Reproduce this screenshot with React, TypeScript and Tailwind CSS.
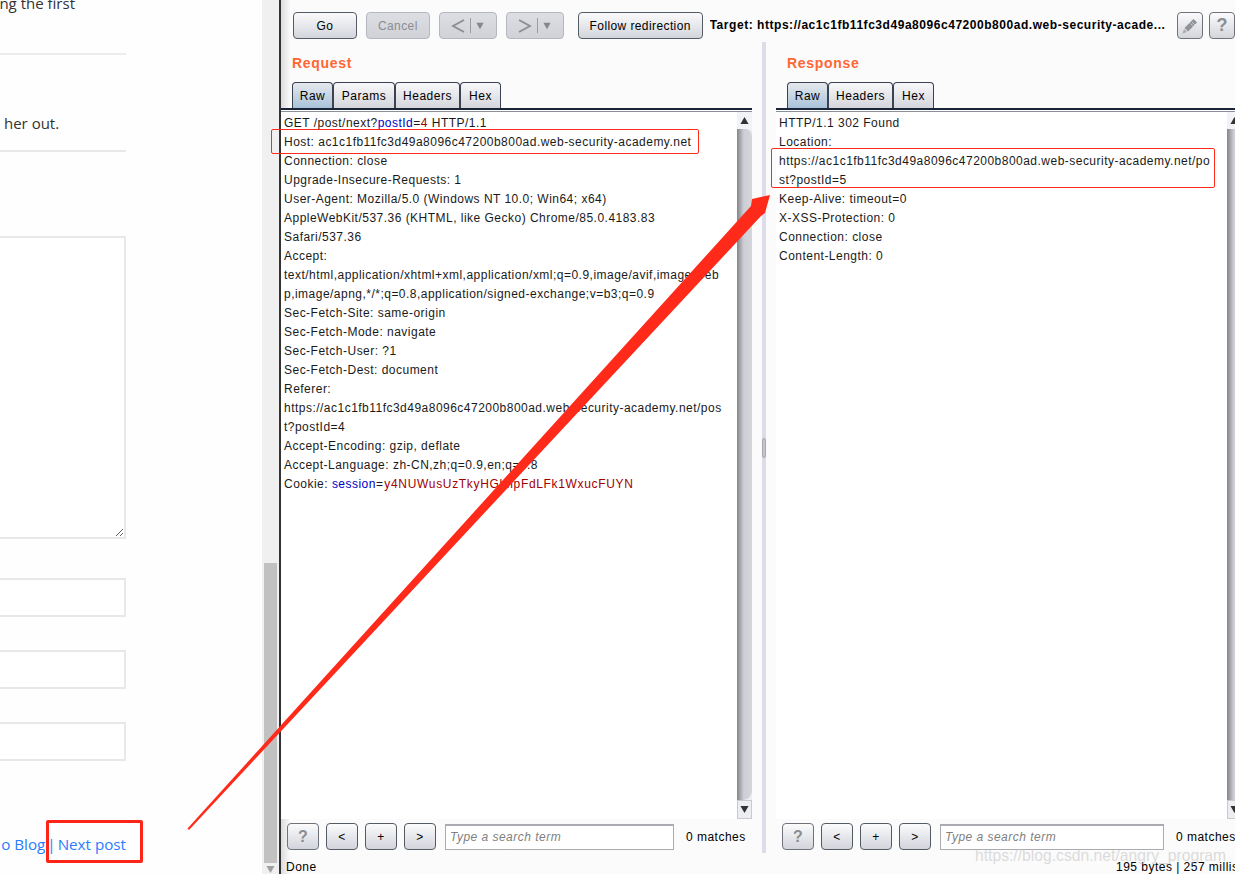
import React from "react";

const btn = "flex items-center justify-center h-[27px] rounded-[4px] border border-[#555b63] bg-gradient-to-b from-[#fbfbfc] to-[#d3d5dc] text-[12px] text-black tracking-[0.4px]";
const btnOff = "flex items-center justify-center h-[27px] rounded-[4px] border border-[#b4b7bd] bg-gradient-to-b from-[#dcdee3] to-[#d0d2d8] text-[12px] text-[#8b8d90] tracking-[0.4px]";
const btnHelp = "flex items-center justify-center h-[27px] rounded-[4px] border border-[#6f7379] bg-gradient-to-b from-[#fbfbfc] to-[#d3d5dc] text-[#8b8d90] font-bold";

const P = ({ c }: { c: string }) => <span className="text-[#0000c8]">{c}</span>;
const V = ({ c }: { c: string }) => <span className="text-[#a00000]">{c}</span>;

const requestLines: React.ReactNode[] = [
  <>GET /post/next?<P c="postId" />=<V c="4" /> HTTP/1.1</>,
  "Host: ac1c1fb11fc3d49a8096c47200b800ad.web-security-academy.net",
  "Connection: close",
  "Upgrade-Insecure-Requests: 1",
  "User-Agent: Mozilla/5.0 (Windows NT 10.0; Win64; x64)",
  "AppleWebKit/537.36 (KHTML, like Gecko) Chrome/85.0.4183.83",
  "Safari/537.36",
  "Accept:",
  "text/html,application/xhtml+xml,application/xml;q=0.9,image/avif,image/web",
  "p,image/apng,*/*;q=0.8,application/signed-exchange;v=b3;q=0.9",
  "Sec-Fetch-Site: same-origin",
  "Sec-Fetch-Mode: navigate",
  "Sec-Fetch-User: ?1",
  "Sec-Fetch-Dest: document",
  "Referer:",
  "https://ac1c1fb11fc3d49a8096c47200b800ad.web-security-academy.net/pos",
  "t?postId=4",
  "Accept-Encoding: gzip, deflate",
  "Accept-Language: zh-CN,zh;q=0.9,en;q=0.8",
  <>Cookie: <P c="session" /><span className="tracking-[1.4px]">=</span><span className="text-[#a00000] tracking-[0.67px]">y4NUWusUzTkyHGhlipFdLFk1WxucFUYN</span></>,
];

const responseLines: React.ReactNode[] = [
  "HTTP/1.1 302 Found",
  "Location:",
  "https://ac1c1fb11fc3d49a8096c47200b800ad.web-security-academy.net/po",
  "st?postId=5",
  "Keep-Alive: timeout=0",
  "X-XSS-Protection: 0",
  "Connection: close",
  "Content-Length: 0",
];

function Tri({ up, color = "#333", size = 10 }: { up?: boolean; color?: string; size?: number }) {
  return (
    <svg width={size} height={size} viewBox="0 0 10 10">
      <polygon points={up ? "5,1 9.5,9 0.5,9" : "0.5,1 9.5,1 5,9"} fill={color} />
    </svg>
  );
}

function Chevron({ left }: { left?: boolean }) {
  return (
    <svg width="14" height="16" viewBox="0 0 14 16">
      <polyline points={left ? "13,2 2,8 13,14" : "1,2 12,8 1,14"} fill="none" stroke="#8b8d90" strokeWidth="1.8" />
    </svg>
  );
}

function NavBtn({ left }: { left?: boolean }) {
  return (
    <div className={`${btnOff} w-[58px] gap-[5px]`}>
      <Chevron left={left} />
      <span className="w-px h-[15px] bg-[#9a9ca0]" />
      <Tri color="#85878b" size={8} />
    </div>
  );
}

function Scrollbar() {
  return (
    <div className="w-[15px] shrink-0 flex flex-col bg-[#eceef2]">
      <div className="h-[17px] flex items-center justify-center bg-[#f2f3f6]"><Tri up size={9} /></div>
      <div className="flex-1 rounded-tr-[7px] rounded-br-[9px] bg-gradient-to-r from-[#858587] via-[#cdcfd6] via-[45%] to-[#d4d6dc]" />
      <div className="h-[19px] flex items-center justify-center bg-[#eceef2] border border-[#c8cad0]"><Tri size={9} /></div>
    </div>
  );
}

function Pane({ title, tabs, lines, outer, inner, inputW }: {
  title: string; tabs: [string, number][]; lines: React.ReactNode[]; outer: string; inner: string; inputW: string;
}) {
  return (
    <section className={`${outer} shrink-0 h-full overflow-hidden flex flex-col`}>
      <div className={`${inner} flex flex-col h-full`}>
        <div className="h-[40px] pl-[11px] pt-[13px] text-[14px] leading-[17px] font-bold text-[#ff6633] tracking-[0.7px]">{title}</div>
        <div className="h-[26px] pl-[11px] flex">
          {tabs.map(([t, w], i) => (
            <div
              key={t}
              style={{ width: w }}
              className={`flex items-center justify-center text-[12px] tracking-[0.5px] border border-b-0 border-[#3a4352] rounded-t-[4px] ${i === 0 ? "bg-gradient-to-b from-[#e6e9ee] to-[#a9c2d9]" : "bg-gradient-to-b from-[#f8f8fa] to-[#d4d6dc]"}`}
            >
              {t}
            </div>
          ))}
        </div>
        <div className="h-[4px] border-t-2 border-b border-t-[#1a2438] border-b-[#8a8f99] bg-white" />
        <div className="h-[707px] flex bg-white">
          <div className="flex-1 pl-[3px] pt-[2px] text-[12px] leading-[19px] tracking-[0.48px] text-[#1a1a1a] whitespace-nowrap overflow-hidden">
            {lines.map((l, i) => <div key={i}>{l}</div>)}
          </div>
          <Scrollbar />
        </div>
        <div className="h-[34px] pl-[6px] flex items-center gap-[7px] pt-[1px]">
          <div className={`${btnHelp} w-[32px] text-[16px]`}>?</div>
          <div className={`${btn} w-[32px]`}>&lt;</div>
          <div className={`${btn} w-[32px]`}>+</div>
          <div className={`${btn} w-[32px]`}>&gt;</div>
          <input
            readOnly
            placeholder="Type a search term"
            className={`${inputW} ml-[2px] h-[26px] border border-[#a9abb0] border-t-2 bg-white px-[4px] text-[12px] tracking-[0.48px] placeholder:italic placeholder:text-[#808080]`}
          />
          <span className="ml-[5px] text-[12px] tracking-[0.48px] text-black whitespace-nowrap">0 matches</span>
        </div>
      </div>
    </section>
  );
}

function Field({ className }: { className: string }) {
  return <div className={`-ml-[10px] w-[136px] h-[39px] border-2 border-[#e8e8e8] bg-white ${className}`} />;
}

export default function App() {
  return (
    <div
      className="relative flex w-[1235px] h-[874px] overflow-hidden bg-white text-black"
      style={{ fontFamily: '"Liberation Sans", Arial, sans-serif' }}
    >
      {/* Blog page */}
      <div className="w-[262px] shrink-0 h-full overflow-hidden bg-[#fefefe] text-[#333]" style={{ fontFamily: '"Open Sans", sans-serif' }}>
        <div className="-mt-[9px] h-[24px] w-[75px] flex justify-end whitespace-nowrap text-[15px] leading-[24px]">ng the first</div>
        <div className="mt-[38px] w-[126px] border-t-2 border-[#ececec]" />
        <div className="mt-[56px] h-[24px] pl-[4px] text-[15px] leading-[24px]">her out.</div>
        <div className="mt-[15px] w-[126px] border-t-2 border-[#e8e8e8]" />
        <textarea readOnly className="block mt-[84px] -ml-[10px] w-[136px] h-[303px] border-2 border-[#e8e8e8] bg-white" />
        <Field className="mt-[39px]" />
        <Field className="mt-[33px]" />
        <Field className="mt-[33px]" />
        <div className="mt-[71px] w-[126px] flex justify-end whitespace-nowrap text-[15.2px] leading-[24px] text-[#2a7cff]">
          <span>o Blog</span>
          <span className="ml-[2px]">|</span>
          <span className="ml-[2px]">Next post</span>
        </div>
      </div>

      {/* Page scrollbar */}
      <div className="w-[17px] shrink-0 h-full bg-[#f0f0f0] flex flex-col items-center pt-[563px]">
        <div className="w-[13px] h-[303px] bg-[#c1c1c1]" />
        <div className="mt-[2px]"><Tri color="#a0a0a0" size={9} /></div>
      </div>
      <div className="w-[2px] shrink-0 h-full bg-[#333]" />

      {/* Burp */}
      <div className="flex-1 min-w-0 h-full flex flex-col bg-gradient-to-r from-[#dcdcdc] via-[#fbfbfb] via-[1%] to-[#fbfbfb]">
        <div className="h-[42px] shrink-0 flex items-start pt-[12px] pl-[12px] whitespace-nowrap overflow-hidden">
          <div className={`${btn} w-[64px]`}>Go</div>
          <div className={`${btnOff} w-[64px] ml-[9px]`}>Cancel</div>
          <div className="ml-[9px]"><NavBtn left /></div>
          <div className="ml-[9px]"><NavBtn /></div>
          <div className={`${btn} w-[125px] ml-[14px]`}>Follow redirection</div>
          <div className="w-[461px] ml-[7px] h-[27px] text-[12px] leading-[27px] font-bold tracking-[0.54px] overflow-hidden">
            Target: https://ac1c1fb11fc3d49a8096c47200b800ad.web-security-acade...
          </div>
          <div className={`${btnHelp} w-[26px] ml-[7px] shrink-0`}>
            <svg width="18" height="18" viewBox="0 0 18 18">
              <path d="M12.5 2 L16 5.5 L7 14.5 L3.5 11 Z" fill="#8f9297" />
              <path d="M3 12 L6 15 L1.5 16.5 Z" fill="#a8aaae" />
              <path d="M11 5 L14 8 M9.5 6.5 L12.5 9.5" stroke="#dcdde2" strokeWidth="0.8" />
            </svg>
          </div>
          <div className={`${btnHelp} w-[26px] ml-[6px] shrink-0 text-[18px]`}>?</div>
        </div>

        <div className="h-[811px] shrink-0 flex">
          <Pane
            title="Request"
            tabs={[["Raw", 41], ["Params", 62], ["Headers", 65], ["Hex", 41]]}
            lines={requestLines}
            outer="w-[471px]"
            inner="w-[471px]"
            inputW="w-[229px]"
          />
          <div className="w-[10px] shrink-0" />
          <div className="w-[4px] shrink-0 h-full bg-[#dcdde8] flex items-center justify-center">
            <div className="w-[4px] h-[20px] rounded-[2px] border border-[#a8aab0] bg-[#c4c6cc]" />
          </div>
          <div className="w-[10px] shrink-0" />
          <Pane
            title="Response"
            tabs={[["Raw", 41], ["Headers", 65], ["Hex", 41]]}
            lines={responseLines}
            outer="w-[459px]"
            inner="w-[466px]"
            inputW="w-[224px]"
          />
        </div>

        <div className="h-[21px] shrink-0 flex justify-between items-start pt-[7px] pl-[5px] text-[12px] leading-[15px] tracking-[0.48px] whitespace-nowrap overflow-hidden">
          <span>Done</span>
          <span className="w-[119px] overflow-hidden">195 bytes | 257 milliseconds</span>
        </div>
      </div>

      {/* Annotations */}
      <div className="absolute left-[271px] top-[129px] w-[428px] h-[25px] border border-[#ff2a1a] rounded-[2px]" />
      <div className="absolute left-[771px] top-[148px] w-[444px] h-[40px] border border-[#ff2a1a] rounded-[2px]" />
      <div className="absolute left-[46px] top-[820px] w-[97px] h-[43px] border-[3px] border-[#ff2418] rounded-[2px]" />
      <svg className="absolute left-0 top-0 pointer-events-none" width="1235" height="874" viewBox="0 0 1235 874">
        <polygon points="187.5,828.5 189,830 761,216 765,213 770,195 752,199 751,206" fill="#ff2a1a" />
      </svg>
      <div className="absolute left-[975px] top-[845px] text-[15.7px] leading-[22px] text-[#b9b9b9]/50 whitespace-nowrap" style={{ fontFamily: '"Liberation Sans", sans-serif' }}>
        https://blog.csdn.net/angry_program
      </div>
    </div>
  );
}
